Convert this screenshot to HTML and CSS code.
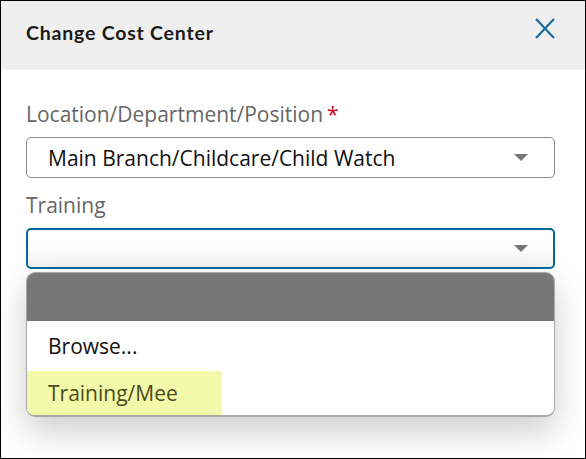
FILE: index.html
```html
<!DOCTYPE html>
<html>
<head>
<meta charset="utf-8">
<link rel="stylesheet" href="styles.css">
</head>
<body>
<div class="dialog">
  <div class="header">
    <div class="title">Change Cost Center</div>
    <svg class="close" width="22" height="21" viewBox="0 0 22 21"><path d="M2 1 L20 20 M20 1 L2 20" stroke="#1a6c9e" stroke-width="2.2" fill="none"/></svg>
  </div>
  <div class="content">
    <div class="label">Location/Department/Position<span class="req">*</span></div>
    <div class="select">
      <span class="value">Main Branch/Childcare/Child Watch</span>
      <span class="caret"></span>
    </div>
    <div class="label label2">Training</div>
    <div class="select focused">
      <span class="value"></span>
      <span class="caret"></span>
    </div>
    <div class="menu">
      <div class="menu-head"></div>
      <div class="item">Browse...</div>
      <div class="item hl">Training/Mee</div>
    </div>
  </div>
</div>
</body>
</html>
```
FILE: styles.css
```css
html, body { margin: 0; padding: 0; }
body { width: 586px; height: 459px; overflow: hidden; background: #fff; }
.dialog {
  width: 586px; height: 459px; box-sizing: border-box;
  border: 1px solid #000; background: #fff; overflow: hidden;
}
.header {
  height: 69px; background: #efefef;
  display: flex; align-items: center; justify-content: space-between;
  padding: 0 29px 0 25px;
}
.title {
  font-family: "Lato", sans-serif; font-weight: 700; font-size: 19.5px; color: #1b1b1b;
  letter-spacing: 0.8px; margin-top: -6px;
}
.close { margin-top: -15px; }
.content { padding: 0 30px 0 25px; }
.label {
  font-family: "Open Sans", sans-serif; font-size: 21px; color: #666;
  line-height: 28px; margin-top: 30px; height: 28px; white-space: nowrap;
}
.label2 { margin-top: 13px; }
.req { color: #d0021b; margin-left: 4px; }
.select {
  margin-top: 9px; height: 41px; box-sizing: border-box;
  border: 1px solid #8a8a8a; border-radius: 5px;
  display: flex; align-items: center; justify-content: space-between;
  padding: 0 26px 0 21px;
  font-family: "Open Sans", sans-serif; font-size: 21px; color: #111;
}
.select.focused {
  border: 2px solid #0069a0; padding: 0 25px 0 20px;
  background: linear-gradient(#fff 40%, #f3f3f3);
}
.caret {
  width: 0; height: 0;
  border-left: 7px solid transparent; border-right: 7px solid transparent;
  border-top: 7px solid #777;
}
.menu {
  margin-top: 3px; border: 1px solid #a8a8a8; border-bottom-width: 2px; border-radius: 9px; overflow: hidden;
  box-shadow: 0 14px 34px rgba(0,0,0,0.2); background: #fff;
}
.menu-head { height: 48px; background: #777; }
.item {
  font-family: "Open Sans", sans-serif; font-size: 21px; color: #111;
  height: 50px; line-height: 50px; padding-left: 21px;
}
.item.hl { width: 174px; background: #f4f9a9; color: #4a4a1c; height: 44px; line-height: 44px; }
```
